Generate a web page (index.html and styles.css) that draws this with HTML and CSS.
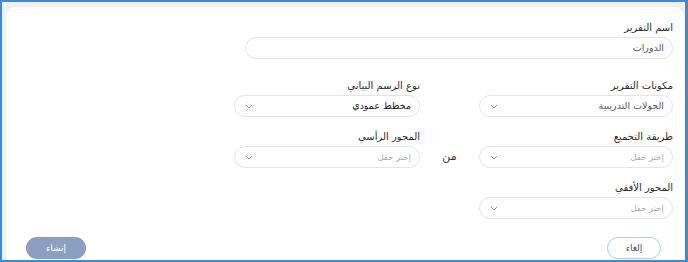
FILE: index.html
```html
<!DOCTYPE html>
<html lang="ar" dir="rtl">
<head>
    <meta charset="UTF-8">
    <title>إنشاء تقرير</title>
    <link rel="stylesheet" href="styles.css">
</head>
<body>
    <div class="frame">
        <div class="card">
            <div class="field field-name">
                <label>اسم التقرير</label>
                <div class="control">الدورات</div>
            </div>

            <div class="grid">
                <div class="field">
                    <label>مكونات التقرير</label>
                    <div class="control select">
                        <span>الجولات التدريبية</span>
                        <svg class="chev" width="8" height="5" viewBox="0 0 8 5"><polyline points="1,1 4,4 7,1"/></svg>
                    </div>
                </div>
                <div></div>
                <div class="field">
                    <label>نوع الرسم البياني</label>
                    <div class="control select dark">
                        <span>مخطط عمودي</span>
                        <svg class="chev" width="8" height="5" viewBox="0 0 8 5"><polyline points="1,1 4,4 7,1"/></svg>
                    </div>
                </div>

                <div class="field">
                    <label>طريقة التجميع</label>
                    <div class="control select placeholder">
                        <span>إختر حقل</span>
                        <svg class="chev" width="8" height="5" viewBox="0 0 8 5"><polyline points="1,1 4,4 7,1"/></svg>
                    </div>
                </div>
                <div class="from">من</div>
                <div class="field">
                    <label>المحور الرأسي</label>
                    <div class="control select placeholder">
                        <span>إختر حقل</span>
                        <svg class="chev" width="8" height="5" viewBox="0 0 8 5"><polyline points="1,1 4,4 7,1"/></svg>
                    </div>
                </div>

                <div class="field">
                    <label>المحور الأفقي</label>
                    <div class="control select placeholder">
                        <span>إختر حقل</span>
                        <svg class="chev" width="8" height="5" viewBox="0 0 8 5"><polyline points="1,1 4,4 7,1"/></svg>
                    </div>
                </div>
            </div>

            <div class="actions">
                <button class="btn btn-cancel">إلغاء</button>
                <button class="btn btn-create">إنشاء</button>
            </div>
        </div>
    </div>
</body>
</html>
```

FILE: styles.css
```css
html, body {
    margin: 0;
    padding: 0;
}
body {
    font-family: "DejaVu Sans", sans-serif;
    color: #333;
}
.frame {
    box-sizing: border-box;
    width: 688px;
    height: 262px;
    border: 2px solid #3d8bd5;
    border-right-width: 3px;
    background: #f1f1f1;
    padding: 5px 1px 0 4px;
    overflow: hidden;
}
.card {
    box-sizing: border-box;
    height: 100%;
    background: #fff;
    border-radius: 10px 10px 0 0;
    padding: 14px 11px 0 20px;
}
.field label {
    display: block;
    font-size: 10px;
    line-height: 14px;
    color: #2b2b2b;
    margin-bottom: 2px;
}
.control {
    box-sizing: border-box;
    height: 22px;
    border: 1px solid #e4e4e4;
    border-radius: 11px;
    padding: 0 8px;
    font-size: 9.5px;
    line-height: 20px;
    color: #555;
    display: flex;
    align-items: center;
    justify-content: space-between;
}
.field-name .control {
    width: 428px;
}
.select.dark {
    color: #222;
}
.select.placeholder {
    color: #aaa;
    font-size: 8.5px;
}
.chev {
    fill: none;
    stroke: #999;
    stroke-width: 1;
    margin-left: 2px;
}
.grid {
    display: grid;
    grid-template-columns: 194px 59px 186px;
    row-gap: 13px;
    margin-top: 20px;
}
.from {
    align-self: end;
    text-align: center;
    font-size: 11px;
    line-height: 22px;
    color: #333;
}
.actions {
    display: flex;
    justify-content: space-between;
    margin-top: 18px;
    padding: 0 12px 0 0;
}
.btn {
    box-sizing: border-box;
    height: 22px;
    border-radius: 11px;
    font-family: "DejaVu Sans", sans-serif;
    font-size: 9px;
    cursor: pointer;
}
.btn-cancel {
    width: 54px;
    background: #fff;
    border: 1px solid #b5c8e6;
    color: #3a4f78;
}
.btn-create {
    width: 60px;
    background: #8a9fc1;
    border: none;
    color: #fff;
}
```
